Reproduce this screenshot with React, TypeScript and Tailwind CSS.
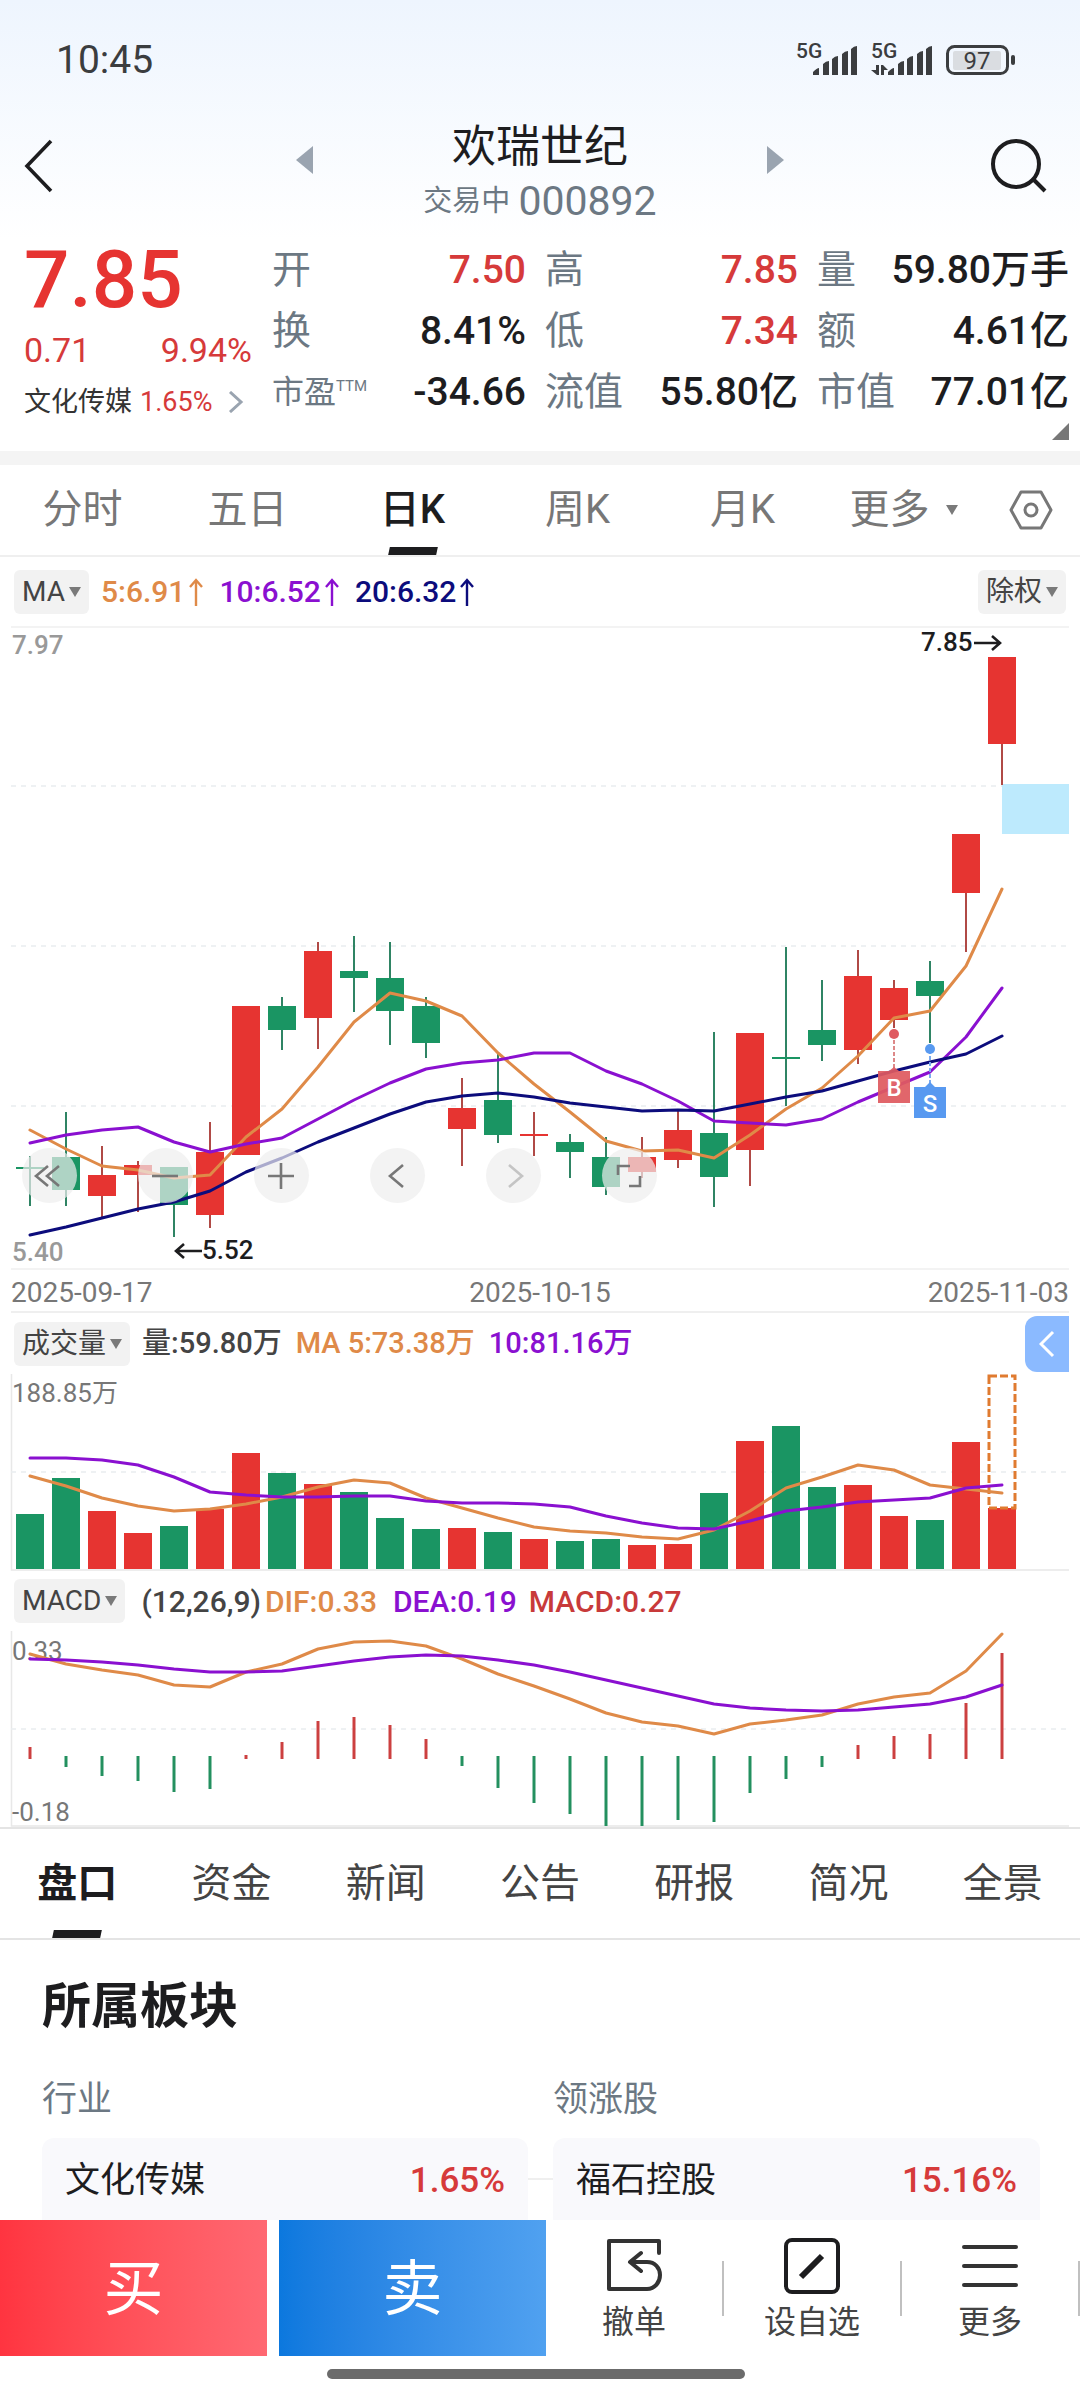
import { useState } from 'react';

const RED = '#e63431';
const GREEN = '#1a9563';
const ORANGE = '#df8a48';
const PURPLE = '#8a10d0';
const NAVY = '#0c0c7c';
const GRID = '#e9edf0';

const STEP = 36;
const BAR = 28;
const cx = (i: number) => 30 + i * STEP;

// up?, high, body top, body bottom, low
const candles: [number, number, number, number, number][] = [
  [0, 530, 541, 543, 580],
  [0, 486, 531, 564, 580],
  [1, 520, 549, 570, 592],
  [1, 535, 539, 549, 586],
  [0, 541, 541, 579, 611],
  [1, 496, 526, 589, 602],
  [1, 380, 380, 529, 529],
  [0, 371, 380, 404, 424],
  [1, 316, 325, 392, 423],
  [0, 310, 345, 352, 386],
  [0, 316, 352, 385, 419],
  [0, 371, 380, 417, 432],
  [1, 452, 482, 503, 540],
  [0, 427, 474, 509, 517],
  [1, 486, 508, 510, 530],
  [0, 508, 516, 526, 552],
  [0, 511, 531, 561, 569],
  [1, 511, 531, 546, 552],
  [1, 484, 504, 534, 542],
  [0, 406, 507, 551, 581],
  [1, 407, 407, 524, 560],
  [0, 321, 431, 433, 480],
  [0, 354, 404, 419, 435],
  [1, 324, 350, 424, 438],
  [1, 354, 362, 394, 402],
  [0, 335, 355, 370, 417],
  [1, 208, 208, 267, 326],
  [1, 31, 31, 118, 159],
];
const ma5 = [504, 523, 540, 544, 552, 549, 511, 483, 441, 396, 367, 375, 390, 427, 458, 486, 515, 525, 524, 532, 509, 483, 462, 430, 392, 385, 340, 263];
const ma10 = [517, 509, 504, 501, 516, 526, 518, 512, 493, 474, 457, 443, 437, 434, 427, 427, 445, 458, 475, 495, 497, 499, 493, 476, 461, 446, 411, 362];
const ma20 = [609, 601, 592, 583, 576, 565, 546, 532, 516, 502, 488, 476, 470, 467, 471, 477, 481, 485, 484, 485, 478, 471, 465, 455, 445, 436, 428, 410];

const volumes = [140, 104, 137, 159, 152, 135, 79, 99, 110, 118, 144, 155, 154, 158, 165, 167, 165, 171, 170, 119, 67, 52, 113, 111, 142, 146, 68, 134];
const vol5 = [102, 112, 124, 132, 137, 135, 130, 123, 113, 106, 109, 124, 134, 144, 153, 157, 159, 163, 165, 156, 137, 114, 103, 91, 96, 111, 115, 119];
const vol10 = [84, 84, 86, 91, 103, 118, 121, 123, 123, 122, 122, 127, 129, 129, 130, 133, 142, 149, 154, 155, 147, 137, 133, 128, 126, 124, 114, 111];

const macd = [116, 136, 145, 150, 161, 158, 124, 111, 90, 86, 94, 108, 135, 157, 172, 183, 195, 195, 189, 191, 162, 148, 136, 114, 105, 103, 72, 22];
const dif = [23, 33, 39, 44, 54, 56, 41, 33, 18, 11, 10, 15, 28, 43, 55, 68, 82, 91, 95, 103, 93, 89, 84, 73, 66, 62, 40, 3];
const dea = [28, 29, 31, 34, 38, 41, 41, 40, 35, 30, 26, 24, 25, 29, 34, 41, 49, 57, 65, 73, 77, 79, 80, 79, 76, 73, 66, 54];

function Line({ data, color }: { data: number[]; color: string }) {
  return (
    <polyline
      points={data.map((y, i) => `${cx(i)},${y}`).join(' ')}
      fill="none"
      stroke={color}
      strokeWidth="3"
      strokeLinejoin="round"
      strokeLinecap="round"
    />
  );
}

function GridLine({ y }: { y: number }) {
  return <line x1="11" x2="1066" y1={y} y2={y} stroke={GRID} strokeWidth="1.5" strokeDasharray="5 5" />;
}

function SignalIcon({ data }: { data?: boolean }) {
  return (
    <svg width="64" height="48" viewBox="0 0 64 48" fill="#3b3d3f">
      <text x="0" y="22" fontSize="21" fontWeight="500">5G</text>
      <path d="M17 39v-3q4-4 6-4v7zM27 39V28q3-3 6-3v14zM36 39V23q3-3 6-3v19zM46 39V18q3-3 6-3v24zM55 39V13q3-3 6-3v29z" />
      {data && <path d="M5 29h3v10H6l-6-5h5zM10 39V29h2l5 5h-4v5z" />}
    </svg>
  );
}

function BatteryIcon() {
  return (
    <svg width="70" height="32" viewBox="0 0 70 32" fill="none">
      <rect x="1.5" y="2.5" width="60" height="27" rx="7" stroke="#3b3d3f" strokeWidth="3" />
      <rect x="7" y="7" width="48" height="19" rx="2" fill="#dadde1" />
      <rect x="65" y="11" width="4" height="10" rx="2" fill="#3b3d3f" />
      <text x="31" y="25" fontSize="24" textAnchor="middle" fill="#3b3d3f">97</text>
    </svg>
  );
}

function Caret() {
  return (
    <svg width="12" height="10" viewBox="0 0 12 10">
      <path d="M0 0h12L6 10z" fill="#7a7a7a" />
    </svg>
  );
}

function Chip({ children }: { children: string }) {
  return (
    <button className="flex h-11 shrink-0 items-center gap-1 rounded-md bg-[#f2f2f2] px-2 text-[28px] font-normal leading-none text-[#444]">
      {children}
      <Caret />
    </button>
  );
}

function UpArrow() {
  return (
    <svg width="14" height="28" viewBox="0 0 14 28" fill="none" stroke="currentColor" strokeWidth="2.4">
      <path d="M7 28V2M1 9l6-7 6 7" />
    </svg>
  );
}

type Quote = { label: string; value: string; up?: boolean; sup?: string };

const quotes: Quote[] = [
  { label: '开', value: '7.50', up: true },
  { label: '高', value: '7.85', up: true },
  { label: '量', value: '59.80万手' },
  { label: '换', value: '8.41%' },
  { label: '低', value: '7.34', up: true },
  { label: '额', value: '4.61亿' },
  { label: '市盈', value: '-34.66', sup: 'TTM' },
  { label: '流值', value: '55.80亿' },
  { label: '市值', value: '77.01亿' },
];

function Header() {
  return (
    <header className="bg-linear-to-b from-[#eef5fe] to-white pb-3">
      <div className="flex h-[120px] items-center justify-between pl-14 pr-16">
        <span className="text-[39px] leading-none text-[#3b3d3f]">10:45</span>
        <div className="flex items-center gap-[11px]">
          <SignalIcon />
          <SignalIcon data />
          <BatteryIcon />
        </div>
      </div>
      <nav className="flex h-[108px] items-center justify-between pl-6 pr-8">
        <button aria-label="返回" className="w-32 pb-4">
          <svg width="30" height="54" viewBox="0 0 30 54" fill="none" stroke="#1d1d1f" strokeWidth="3.6">
            <path d="M27 2L3 27l24 25" />
          </svg>
        </button>
        <div className="flex w-[488px] items-center justify-between">
          <button aria-label="上一只" className="pb-7">
            <svg width="17" height="28" viewBox="0 0 17 28"><path d="M17 0v28L0 14z" fill="#9aa4b0" /></svg>
          </button>
          <div className="text-center">
            <h1 className="text-[44px] leading-[54px] text-[#1d1d1f]">欢瑞世纪</h1>
            <p className="flex items-center justify-center gap-2 leading-[54px] text-[#6c7883]">
              <span className="text-[29px]">交易中</span>
              <span className="text-[41px]">000892</span>
            </p>
          </div>
          <button aria-label="下一只" className="pb-7">
            <svg width="17" height="28" viewBox="0 0 17 28"><path d="M0 0v28l17-14z" fill="#9aa4b0" /></svg>
          </button>
        </div>
        <button aria-label="搜索" className="flex w-[120px] justify-end pb-4">
          <svg width="58" height="56" viewBox="0 0 58 56" fill="none" stroke="#1d1d1f" strokeWidth="4">
            <circle cx="26" cy="26" r="23" />
            <path d="M43 41l12 12" />
          </svg>
        </button>
      </nav>
    </header>
  );
}

function Quotes() {
  return (
    <section className="flex gap-5 pl-6 pr-[11px]">
      <div className="w-[228px] shrink-0 text-[#d63a3a]">
        <p className="text-[80px] font-medium leading-[80px] text-[#e63431]">7.85</p>
        <p className="flex justify-between text-[34px] leading-[61px]">
          <span>0.71</span>
          <span>9.94%</span>
        </p>
        <a href="#sector" className="flex items-center gap-2 text-[27px] leading-[42px]">
          <span className="text-[#333]">文化传媒</span>
          <span>1.65%</span>
          <svg className="ml-2" width="16" height="22" viewBox="0 0 16 22" fill="none" stroke="#9aa4b0" strokeWidth="3">
            <path d="M2 1l11 10L2 21" />
          </svg>
        </a>
      </div>
      <div className="flex-1">
        <dl className="grid grid-cols-[254fr_253fr_252fr] gap-x-[19px] text-[39px] leading-[61px]">
          {quotes.map((q) => (
            <div key={q.label} className="flex justify-between whitespace-nowrap">
              <dt className={q.sup ? 'text-[32px] text-[#6c7883]' : 'text-[#6c7883]'}>
                {q.label}
                {q.sup && <sup className="-top-3 text-[15px]">{q.sup}</sup>}
              </dt>
              <dd className={q.up ? 'font-medium text-[#d63a3a]' : 'font-medium text-[#1d1d1f]'}>{q.value}</dd>
            </div>
          ))}
        </dl>
        <div className="flex h-7 justify-end">
          <svg width="17" height="17" viewBox="0 0 17 17"><path d="M17 0v17H0z" fill="#777" /></svg>
        </div>
      </div>
    </section>
  );
}

function PeriodTabs() {
  const periods = ['分时', '五日', '日K', '周K', '月K'];
  const [active, setActive] = useState('日K');
  return (
    <nav className="flex h-[92px] items-stretch border-b-2 border-[#efefef] text-[40px] text-[#777]">
      {periods.map((p) => (
        <button
          key={p}
          onClick={() => setActive(p)}
          className={`relative flex-[165] ${p === active ? 'font-medium text-[#1d1d1f]' : ''}`}
        >
          {p}
          {p === active && <span className="absolute bottom-0 left-1/2 h-2 w-12 -translate-x-1/2 -skew-x-12 bg-[#1d1d1f]" />}
        </button>
      ))}
      <button className="flex flex-[157] items-center justify-center gap-4">
        更多
        <Caret />
      </button>
      <button aria-label="设置" className="flex flex-[98] items-center justify-center">
        <svg width="44" height="40" viewBox="0 0 44 40" fill="none" stroke="#777" strokeWidth="3">
          <path d="M12 2h20l10 18-10 18H12L2 20z" strokeLinejoin="round" />
          <circle cx="22" cy="20" r="6" />
        </svg>
      </button>
    </nav>
  );
}

const tools = [
  { name: '最早', d: 'M26 18L14 28l12 10M37 18L25 28l12 10' },
  { name: '缩小', d: 'M14 28h26' },
  { name: '放大', d: 'M14 28h26M27 15v26' },
  { name: '左移', d: 'M33 17L20 28l13 11' },
  { name: '右移', d: 'M23 17l13 11-13 11', off: true },
  { name: '全屏', d: 'M16 27V18h12M38 28v10H27' },
];

function KLine() {
  return (
    <section>
      <div className="flex h-[69px] items-center px-[14px] text-[30px] font-medium">
        <Chip>MA</Chip>
        <div className="ml-3 flex flex-1 gap-4">
          <span className="flex items-center gap-1 text-[#df8a48]">5:6.91 <UpArrow /></span>
          <span className="flex items-center gap-1 text-[#8a10d0]">10:6.52 <UpArrow /></span>
          <span className="flex items-center gap-1 text-[#0c0c7c]">20:6.32 <UpArrow /></span>
        </div>
        <Chip>除权</Chip>
      </div>
      <div className="relative">
        <svg viewBox="0 0 1080 644" className="block w-full">
          <path d="M11 1H1069M11 643H1069" stroke="#efefef" strokeWidth="1.5" />
          <GridLine y={160} />
          <GridLine y={320} />
          <GridLine y={480} />
          <rect x="1002" y="158" width="67" height="50" fill="#bdeafd" />
          {candles.map(([up, high, top, bottom, low], i) => (
            <g key={i} fill={up ? RED : GREEN}>
              <rect x={cx(i) - 1} y={high} width="2" height={low - high} fill={up ? '#b04a46' : '#2f8464'} />
              <rect x={cx(i) - BAR / 2} y={top} width={BAR} height={bottom - top} />
            </g>
          ))}
          <Line data={ma5} color={ORANGE} />
          <Line data={ma10} color={PURPLE} />
          <Line data={ma20} color={NAVY} />
          <g fontSize="26" fontWeight="500" fill="#999">
            <text x="12" y="28">7.97</text>
            <text x="12" y="635">5.40</text>
            <text x="202" y="633" fill="#1d1d1f">5.52</text>
            <text x="921" y="25" fill="#1d1d1f">7.85</text>
          </g>
          <g fill="none" stroke="#1d1d1f" strokeWidth="2.6">
            <path d="M202 625H176M184 618l-8 7 8 7M974 17h26M992 10l8 7-8 7" />
          </g>
          {/* 买卖点 */}
          <g fill="#df5a60">
            <path d="M894 408v36" stroke="#d88" strokeWidth="2" strokeDasharray="4 2" />
            <circle cx="894" cy="408" r="5" />
            <path d="M878 445h11l5-4 5 4h11v32h-32z" opacity="0.93" />
          </g>
          <g fill="#5899f0">
            <path d="M930 424v34" stroke="#79a9f0" strokeWidth="2" strokeDasharray="4 2" />
            <circle cx="930" cy="423" r="5" />
            <path d="M914 461h11l5-5 5 5h11v31h-32z" />
          </g>
          <g fill="#fff" fontSize="24" fontWeight="500" textAnchor="middle">
            <text x="894" y="470">B</text>
            <text x="930" y="486">S</text>
          </g>
        </svg>
        <div className="absolute bottom-[67px] left-[22px] flex gap-[61px]">
          {tools.map((t) => (
            <button key={t.name} aria-label={t.name} className="size-[55px] rounded-full bg-[#eeeeee]/70">
              <svg viewBox="0 0 55 55" fill="none" stroke={t.off ? '#c4c4c4' : '#777'} strokeWidth="2.6">
                <path d={t.d} />
              </svg>
            </button>
          ))}
        </div>
      </div>
      <div className="mx-[11px] flex h-[43px] items-center justify-between border-b-2 border-[#efefef] pt-1 text-[28px] text-[#777]">
        <span>2025-09-17</span>
        <span>2025-10-15</span>
        <span>2025-11-03</span>
      </div>
    </section>
  );
}

function Volume() {
  return (
    <section>
      <div className="flex h-[61px] items-center pl-[14px] pr-[11px] text-[29px] font-medium">
        <Chip>成交量</Chip>
        <div className="ml-3 flex flex-1 gap-[14px] whitespace-nowrap">
          <span className="text-[#444]">量:59.80万</span>
          <span className="text-[#df8a48]">MA 5:73.38万</span>
          <span className="text-[#8a10d0]">10:81.16万</span>
        </div>
        <button aria-label="展开" className="flex h-14 w-11 items-center justify-center rounded-l-xl bg-[#8bbaff]">
          <svg width="16" height="28" viewBox="0 0 16 28" fill="none" stroke="#fff" strokeWidth="3">
            <path d="M14 2L2 14l12 12" />
          </svg>
        </button>
      </div>
      <svg viewBox="0 0 1080 197" className="block w-full">
        <path d="M11.500 0V196H1069" fill="none" stroke="#e8e8e8" strokeWidth="1.5" />
        <GridLine y={98} />
        {volumes.map((y, i) => (
          <rect key={i} x={cx(i) - BAR / 2} y={y} width={BAR} height={195 - y} fill={candles[i][0] ? RED : GREEN} />
        ))}
        <rect x="989" y="2" width="26" height="132" fill="none" stroke="#e07b30" strokeWidth="3" strokeDasharray="8 3" />
        <Line data={vol5} color={ORANGE} />
        <Line data={vol10} color={PURPLE} />
        <text x="12" y="28" fontSize="26" fill="#777">188.85万</text>
      </svg>
    </section>
  );
}

function Macd() {
  return (
    <section>
      <div className="flex h-[60px] items-center px-[14px] text-[30px] font-medium">
        <Chip>MACD</Chip>
        <span className="ml-4 text-[#444]">(12,26,9)</span>
        <span className="ml-1 text-[#df8a48]">DIF:0.33</span>
        <span className="ml-4 text-[#8a10d0]">DEA:0.19</span>
        <span className="ml-3 text-[#c83a3a]">MACD:0.27</span>
      </div>
      <svg viewBox="0 0 1080 196" className="block w-full">
        <path d="M11.500 0V195H1069" fill="none" stroke="#e8e8e8" strokeWidth="1.5" />
        <GridLine y={98} />
        <text x="12" y="29" fontSize="26" fill="#777">0.33</text>
        <text x="12" y="190" fontSize="26" fill="#777">-0.18</text>
        {macd.map((y, i) => (
          <line key={i} x1={cx(i)} x2={cx(i)} y1={y < 126 ? 128 : 125} y2={y} stroke={y < 126 ? '#cc4040' : '#23905f'} strokeWidth="3" />
        ))}
        <Line data={dif} color={ORANGE} />
        <Line data={dea} color={PURPLE} />
      </svg>
    </section>
  );
}

function InfoTabs() {
  const tabs = ['盘口', '资金', '新闻', '公告', '研报', '简况', '全景'];
  const [active, setActive] = useState('盘口');
  return (
    <nav className="flex h-[113px] items-stretch border-y-2 border-[#e4e4e4] text-[40px] text-[#444]">
      {tabs.map((t) => (
        <button
          key={t}
          onClick={() => setActive(t)}
          className={`relative flex-1 ${t === active ? 'font-bold text-[#1d1d1f]' : ''}`}
        >
          {t}
          {t === active && <span className="absolute bottom-0 left-1/2 h-2 w-12 -translate-x-1/2 -skew-x-12 bg-[#1d1d1f]" />}
        </button>
      ))}
    </nav>
  );
}

const sectors = [
  { title: '行业', name: '文化传媒', rate: '1.65%' },
  { title: '领涨股', name: '福石控股', rate: '15.16%' },
];

function Sector() {
  return (
    <section id="sector" className="flex-1 pl-[42px] pr-10">
      <h2 className="pt-8 text-[49px] font-bold leading-[70px] text-[#1d1d1f]">所属板块</h2>
      <div className="mt-8 flex">
        {sectors.map((s, i) => (
          <div key={s.title} className={i ? 'flex-[487]' : 'flex-[511]'}>
            <h3 className="text-[35px] leading-[52px] text-[#6c7883]">{s.title}</h3>
            <div className="mt-3 flex items-center">
              <div className="flex h-[82px] flex-1 items-center justify-between rounded-t-xl bg-[#f9f9fc] px-[23px] pt-1 text-[35px]">
                <span className="text-[#1d1d1f]">{s.name}</span>
                <span className="font-medium text-[#d63a3a]">{s.rate}</span>
              </div>
              {i === 0 && <span className="h-[2px] w-[25px] bg-[#efefef]" />}
            </div>
          </div>
        ))}
      </div>
    </section>
  );
}

function BottomBar() {
  return (
    <footer>
      <div className="flex h-[136px]">
        <button className="mr-3 flex-[267] bg-linear-to-r from-[#ff3440] to-[#ff6872] pt-1 text-[60px] text-white">买</button>
        <button className="flex-[267] bg-linear-to-r from-[#0b78de] to-[#50a1f0] pt-1 text-[60px] text-white">卖</button>
        <div className="flex flex-[534] items-center text-[32px] leading-10 text-[#444]">
          <button className="flex flex-1 flex-col items-center gap-2 pt-1">
            <svg width="56" height="56" viewBox="0 0 56 56" fill="none" stroke="#333" strokeWidth="4">
              <path d="M53 15V3H3v48h38c8 0 13-7 13-14s-5-13-13-13H25M35 15l-11 9 11 9" strokeLinejoin="round" strokeLinecap="round" />
            </svg>
            撤单
          </button>
          <span className="h-[55px] w-[2px] bg-[#c0c0c0]" />
          <button className="flex flex-1 flex-col items-center gap-2 pt-1">
            <svg width="56" height="56" viewBox="0 0 56 56" fill="none" stroke="#1d1d1f" strokeWidth="4">
              <rect x="2" y="2" width="52" height="52" rx="6" />
              <path d="M17 39L38 18" strokeWidth="6" />
            </svg>
            设自选
          </button>
          <span className="h-[55px] w-[2px] bg-[#c0c0c0]" />
          <button className="flex flex-1 flex-col items-center gap-2 pt-1">
            <svg width="56" height="56" viewBox="0 0 56 56" stroke="#333" strokeWidth="4" strokeLinecap="round">
              <path d="M2 9h52M2 28h52M2 47h52" />
            </svg>
            更多
          </button>
          <span className="h-[55px] w-[2px] bg-[#c0c0c0]" />
        </div>
      </div>
      <div className="flex h-11 items-center justify-center pb-2 pr-2">
        <span className="h-[10px] w-[418px] rounded-full bg-[#6b6b6b]" />
      </div>
    </footer>
  );
}

export default function App() {
  return (
    <div className="flex min-h-screen flex-col bg-white font-['Roboto','Noto_Sans_CJK_SC',sans-serif]">
      <Header />
      <Quotes />
      <div className="h-[14px] bg-[#f4f4f4]" />
      <PeriodTabs />
      <KLine />
      <Volume />
      <Macd />
      <InfoTabs />
      <Sector />
      <BottomBar />
    </div>
  );
}
